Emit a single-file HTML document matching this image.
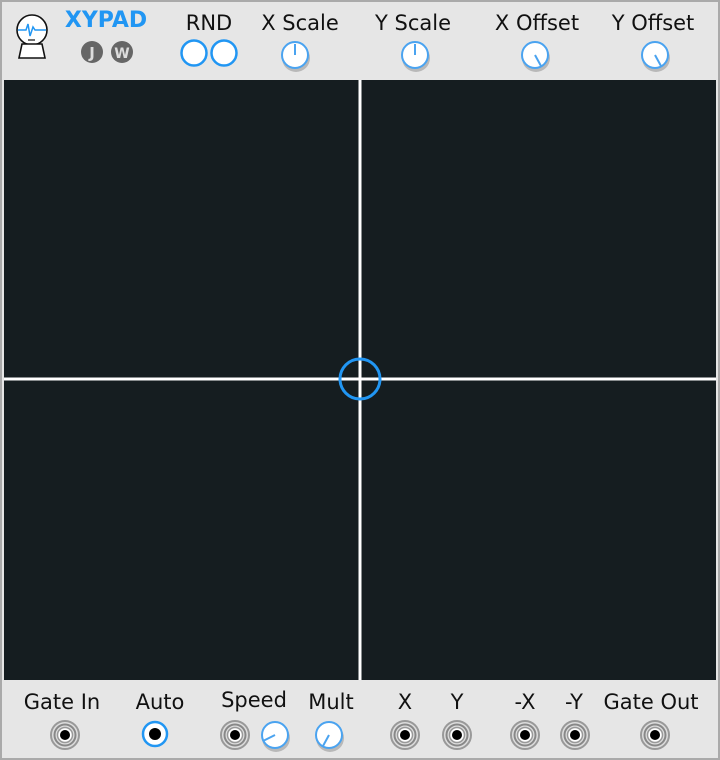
<!DOCTYPE html><html><head><style>
body{margin:0;width:720px;height:760px;overflow:hidden;background:#e6e6e6;font-family:"DejaVu Sans","Liberation Sans",sans-serif}
.t{position:absolute;font-size:21px;color:#111;transform:translateX(-50%);white-space:nowrap}
</style></head><body>
<div style="position:absolute;left:0;top:0;width:716px;height:756px;border:2px solid #aaa"></div>
<div style="position:absolute;left:4px;top:80px;width:712px;height:600px;background:#151d20"></div>
<div class="t" style="left:106px;top:8px;color:#2196f3;font-weight:bold;font-size:22px">XYPAD</div>
<div class="t" style="left:209px;top:11px">RND</div>
<div class="t" style="left:300px;top:11px">X Scale</div>
<div class="t" style="left:413px;top:11px">Y Scale</div>
<div class="t" style="left:537px;top:11px">X Offset</div>
<div class="t" style="left:653px;top:11px">Y Offset</div>
<div class="t" style="left:62px;top:690px">Gate In</div>
<div class="t" style="left:160px;top:690px">Auto</div>
<div class="t" style="left:254px;top:688px">Speed</div>
<div class="t" style="left:331px;top:690px">Mult</div>
<div class="t" style="left:405px;top:690px">X</div>
<div class="t" style="left:457px;top:690px">Y</div>
<div class="t" style="left:525px;top:690px">-X</div>
<div class="t" style="left:574px;top:690px">-Y</div>
<div class="t" style="left:651px;top:690px">Gate Out</div>
<svg width="720" height="760" style="position:absolute;left:0;top:0">
<defs>
<g id="j"><circle r="14" fill="#ddd" stroke="#999" stroke-width="2"/><circle r="10.5" fill="none" stroke="#888" stroke-width="2"/><circle r="7.5" fill="#fff" stroke="#999" stroke-width="1.5"/><circle r="5" fill="#000"/></g>
<g id="k"><circle r="14" cx="1" cy="3" fill="#b8b8b8" stroke="none"/><circle r="13" fill="#fff" stroke="#4aa3f0" stroke-width="2"/></g>
</defs>
<g stroke="#111" stroke-width="1.6" fill="#fff">
<circle cx="32" cy="30" r="15"/>
<path d="M22 44 L19 58 L45 58 L42 44 Z"/>
</g>
<path d="M18 30 H26 L28 24 L30 36 L33 27 L35 30 H46" stroke="#2196f3" stroke-width="1.5" fill="none"/>
<path d="M28 40 H35" stroke="#111" stroke-width="1.2"/>
<circle cx="92" cy="52" r="11" fill="#666"/><text x="92" y="58" fill="#ddd" font-size="15" font-weight="bold" text-anchor="middle" font-family="DejaVu Sans">J</text>
<circle cx="122" cy="52" r="11" fill="#666"/><text x="122" y="58" fill="#ddd" font-size="14" font-weight="bold" text-anchor="middle" font-family="DejaVu Sans">W</text>
<circle cx="194" cy="53" r="12.5" fill="#fff" stroke="#2196f3" stroke-width="2.5"/>
<circle cx="224" cy="53" r="12.5" fill="#fff" stroke="#2196f3" stroke-width="2.5"/>
<use href="#k" x="295" y="55"/><use href="#k" x="415" y="55"/><use href="#k" x="535" y="55"/><use href="#k" x="655" y="55"/><use href="#k" x="275" y="735"/><use href="#k" x="329" y="735"/>
<g stroke="#4aa3f0" stroke-width="2">
<line x1="295" y1="55" x2="295" y2="44"/>
<line x1="415" y1="55" x2="415" y2="44"/>
<line x1="535" y1="55" x2="541" y2="66"/>
<line x1="655" y1="55" x2="661" y2="66"/>
<line x1="275" y1="735" x2="263" y2="741"/>
<line x1="329" y1="735" x2="323" y2="746"/>
</g>
<line x1="360" y1="80" x2="360" y2="680" stroke="#fff" stroke-width="3"/>
<line x1="4" y1="379" x2="716" y2="379" stroke="#fff" stroke-width="3"/>
<circle cx="360" cy="379" r="20" fill="none" stroke="#2196f3" stroke-width="3"/>
<use href="#j" x="65" y="735"/>
<circle cx="155" cy="734" r="12" fill="#fff" stroke="#2196f3" stroke-width="2.5"/><circle cx="155" cy="734" r="6" fill="#000"/>
<use href="#j" x="235" y="735"/>
<use href="#j" x="405" y="735"/>
<use href="#j" x="457" y="735"/>
<use href="#j" x="525" y="735"/>
<use href="#j" x="575" y="735"/>
<use href="#j" x="655" y="735"/>
</svg>
</body></html>
